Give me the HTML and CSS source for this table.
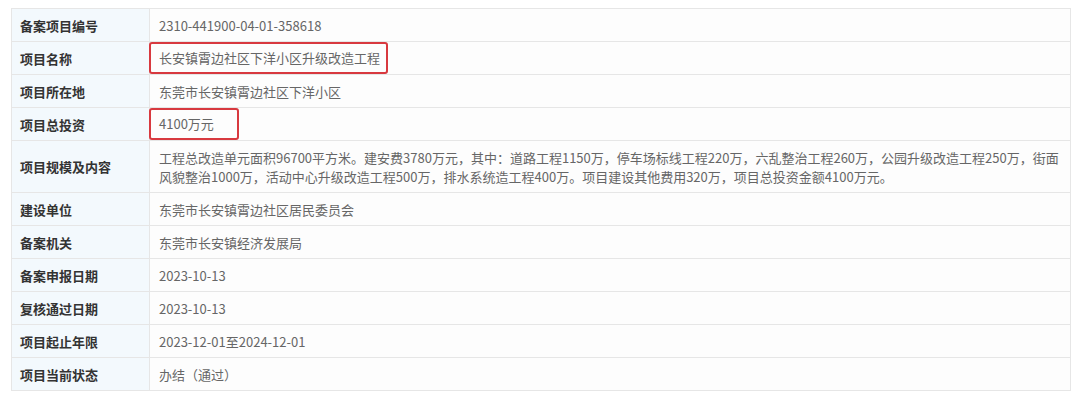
FILE: index.html
```html
<!DOCTYPE html>
<html lang="zh-CN">
<head>
    <meta charset="UTF-8">
    <title>项目备案信息</title>
    <link rel="stylesheet" href="styles.css">
</head>
<body>
    <!-- 备案信息表 -->
    <table class="info-table">
        <tr>
            <th>备案项目编号</th>
            <td>2310-441900-04-01-358618</td>
        </tr>
        <tr>
            <th>项目名称</th>
            <td class="marked"><span class="mark mark-name">长安镇霄边社区下洋小区升级改造工程</span></td>
        </tr>
        <tr>
            <th>项目所在地</th>
            <td>东莞市长安镇霄边社区下洋小区</td>
        </tr>
        <tr>
            <th>项目总投资</th>
            <td class="marked"><span class="mark mark-money">4100万元</span></td>
        </tr>
        <tr class="tall">
            <th>项目规模及内容</th>
            <td>工程总改造单元面积96700平方米。建安费3780万元，其中：道路工程1150万，停车场标线工程220万，六乱整治工程260万，公园升级改造工程250万，街面风貌整治1000万，活动中心升级改造工程500万，排水系统造工程400万。项目建设其他费用320万，项目总投资金额4100万元。</td>
        </tr>
        <tr>
            <th>建设单位</th>
            <td>东莞市长安镇霄边社区居民委员会</td>
        </tr>
        <tr>
            <th>备案机关</th>
            <td>东莞市长安镇经济发展局</td>
        </tr>
        <tr>
            <th>备案申报日期</th>
            <td>2023-10-13</td>
        </tr>
        <tr>
            <th>复核通过日期</th>
            <td>2023-10-13</td>
        </tr>
        <tr>
            <th>项目起止年限</th>
            <td>2023-12-01至2024-12-01</td>
        </tr>
        <tr>
            <th>项目当前状态</th>
            <td>办结（通过）</td>
        </tr>
    </table>
</body>
</html>
```

FILE: styles.css
```css
body {
    margin: 0;
    padding: 8px 9px 0 11px;
    background-color: #ffffff;
    font-family: "Noto Sans CJK SC", "Microsoft YaHei", sans-serif;
}

.info-table {
    width: 1060px;
    border-collapse: collapse;
    border: 1px solid #e6e6e6;
}

.info-table th,
.info-table td {
    border: 1px solid #e6e6e6;
    height: 32px;
    padding: 0 9px;
    font-size: 13px;
    line-height: 19px;
    text-align: left;
    vertical-align: middle;
}

.info-table th {
    width: 120px;
    padding-left: 8px;
    background-color: #f3f9fd;
    color: #333333;
    font-weight: bold;
}

.info-table td {
    background-color: #fdfdfd;
    color: #666666;
}

.info-table .tall th,
.info-table .tall td {
    height: 51px;
}

/* 红框标注 */
.info-table td.marked {
    padding: 0;
}

.mark {
    display: inline-block;
    height: 28px;
    line-height: 28px;
    margin-left: -1px;
    border: 2px solid #d8393f;
    border-radius: 3px;
    padding: 0 6px 0 8px;
    vertical-align: middle;
}

.mark-money {
    width: 72px;
}
```
